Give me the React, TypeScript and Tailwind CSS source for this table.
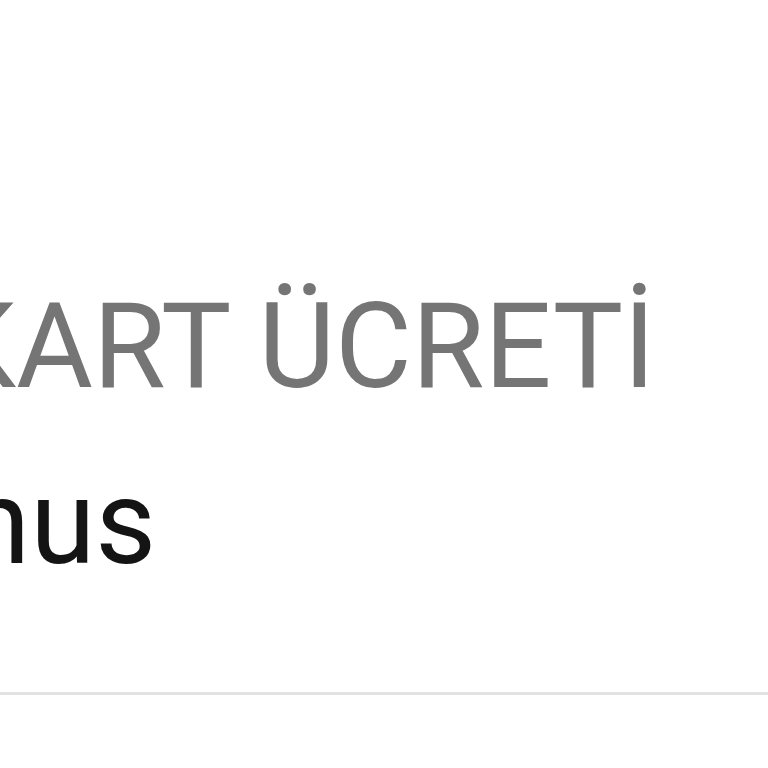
export default function App() {
  return (
    <div className="w-[768px] h-[768px] overflow-hidden bg-white" style={{ fontFamily: "Roboto, 'Noto Sans', sans-serif" }}>
      <div className="flex flex-col pt-[288px] gap-[58px]">
        <div className="-ml-[58px] text-[118px] leading-none whitespace-nowrap text-[#757575]">KART ÜCRETİ</div>
        <div className="-ml-[35px] text-[118px] leading-none whitespace-nowrap text-[#141414]">nus</div>
      </div>
      <div className="mt-[110px] h-[3px] bg-[#e2e2e2]" />
    </div>
  )
}
